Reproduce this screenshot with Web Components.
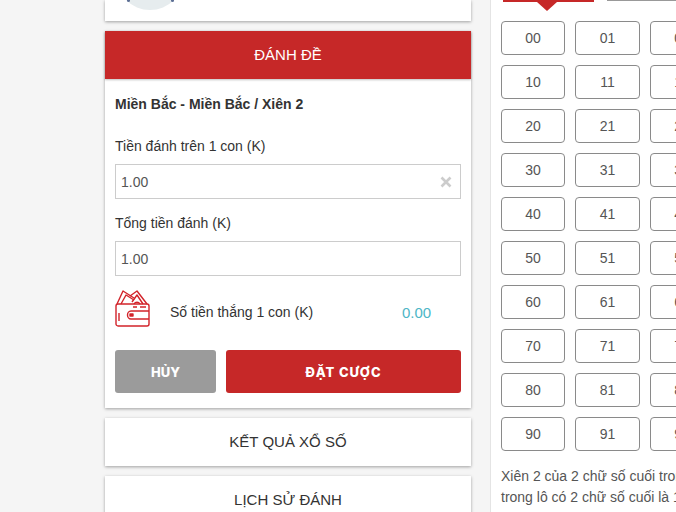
<!DOCTYPE html>
<html lang="vi">
<head>
<meta charset="utf-8">
<title>Đánh đề</title>
<style>
    html, body { margin: 0; height: 100%; overflow: hidden; background: #f5f5f5; }
    body { font-family: "Liberation Sans", Arial, sans-serif; color: #333; font-size: 14px; }
</style>
</head>
<body>
<bet-page>
    <div slot="left">
        <profile-card></profile-card>
        <bet-form></bet-form>
        <link-card>KẾT QUẢ XỔ SỐ</link-card>
        <link-card>LỊCH SỬ ĐÁNH</link-card>
    </div>
    <number-panel slot="right">Xiên 2 của 2 chữ số cuối trong lô có 2 chữ số cuối là 1 trong các số đã chọn<br>trong lô có 2 chữ số cuối là 1 trong các số đã chọn</number-panel>
</bet-page>

<template id="bet-page-tpl">
    <style>
        :host { display: flex; height: 512px; width: 1000px; padding-left: 105px; box-sizing: border-box; gap: 19px; align-items: flex-start; }
        .left { width: 366px; flex: none; }
        .right { width: 420px; flex: none; }
    </style>
    <div class="left"><slot name="left"></slot></div>
    <div class="right"><slot name="right"></slot></div>
</template>

<template id="profile-card-tpl">
    <style>
        :host { display: block; height: 21px; background: #fff; box-shadow: 0 1px 3px rgba(0,0,0,.35); overflow: hidden; margin-bottom: 10px; position: relative; }
        .avatar { width: 68px; height: 68px; border-radius: 50%; background: #e6ecee; margin: -58.5px 0 0 11px; }
        .dot { position: absolute; top: -1px; width: 3px; height: 3px; border-radius: 50%; background: #5d6f95; }
    </style>
    <div class="avatar"></div>
    <div class="dot" style="left:22px"></div>
    <div class="dot" style="left:66px"></div>
</template>

<template id="bet-form-tpl">
    <style>
        :host { display: block; background: #fff; box-shadow: 0 1px 3px rgba(0,0,0,.35); margin-bottom: 10px; height: 377px; }
        .head { height: 46px; padding-bottom: 2px; background: #c62828; color: #fff; font-size: 15px; display: flex; align-items: center; justify-content: center; box-shadow: 0 1px 2px rgba(0,0,0,.25); }
        .body { padding: 17px 10px 0; }
        .title { font-weight: bold; line-height: 16px; color: #333; }
        label { display: block; line-height: 16px; margin: 26px 0 10px; }
        .field { height: 35px; border: 1px solid #ccc; box-sizing: border-box; display: flex; align-items: center; justify-content: space-between; padding: 0 8px 0 5px; color: #555; margin-bottom: -1px; }
        .field svg { display: block; }
        .win { display: flex; align-items: center; height: 40px; margin-top: 13px; }
        .win svg { flex: none; }
        .win span { margin-top: 8px; }
        .win .txt { margin-left: 20px; width: 232px; }
        .win .val { color: #4db6c6; font-size: 15px; }
        .btns { display: flex; gap: 10px; margin-top: 22px; }
        .btn { height: 43px; border-radius: 3px; display: flex; align-items: center; justify-content: center; color: #fff; font: 800 13px Inter, "Open Sans", sans-serif; }
        .cancel { width: 101px; background: #9b9b9b; }
        .ok { flex: 1; background: #c62828; letter-spacing: .9px; }
    </style>
    <div class="head">ĐÁNH ĐỀ</div>
    <div class="body">
        <div class="title">Miền Bắc - Miền Bắc / Xiên 2</div>
        <label>Tiền đánh trên 1 con (K)</label>
        <div class="field">1.00
            <svg width="12" height="12" viewBox="0 0 12 12"><path d="M1.5 1.5l9 9M10.5 1.5l-9 9" stroke="#ccc" stroke-width="2.6" fill="none"/></svg>
        </div>
        <label style="margin-top:17px">Tổng tiền đánh (K)</label>
        <div class="field">1.00</div>
        <div class="win">
            <svg width="35" height="37" viewBox="0 0 35 37" fill="none" stroke="#d2232a" stroke-width="1.4" stroke-linejoin="round">
                <path d="M2 14L8 1l11 7"/>
                <path d="M6 14l5-9 8 5"/>
                <path d="M15 6l7-5 10 13"/>
                <path d="M17 12l5-7 6 9"/>
                <path d="M19 14a3.500 3.500 0 0 1 6 0"/>
                <path d="M1 16c0-1 1-2 2-2h29c1 0 2 1 2 2v18c0 1-1 2-2 2H3c-1 0-2-1-2-2z"/>
                <path d="M34 21H16c-2 0-3.500 2-3.500 4S14 29 16 29h18"/>
                <path d="M15 24h3v2h-3z" fill="#d2232a"/>
                <path d="M4 23v8M18 17h4M25 17h6"/>
            </svg>
            <span class="txt">Số tiền thắng 1 con (K)</span>
            <span class="val">0.00</span>
        </div>
        <div class="btns">
            <div class="btn cancel">HỦY</div>
            <div class="btn ok">ĐẶT CƯỢC</div>
        </div>
    </div>
</template>

<template id="link-card-tpl">
    <style>
        :host { display: flex; height: 46px; padding-bottom: 2px; align-items: center; justify-content: center; background: #fff; box-shadow: 0 1px 3px rgba(0,0,0,.35); font-size: 15px; color: #333; margin-bottom: 10px; }
    </style>
    <slot></slot>
</template>

<template id="number-panel-tpl">
    <style>
        :host { display: block; background: #fff; height: 512px; border-left: 1px solid #e4e4e4; box-sizing: border-box; padding: 0 10px; overflow: hidden; }
        .tabs { display: flex; gap: 13px; height: 21px; padding-left: 2px; }
        .tab { width: 91px; height: 1px; background: #999; position: relative; }
        .tab.on { height: 2px; background: #c62828; }
        .tab.on::after { content: ""; position: absolute; left: 34px; top: 2px; border: 10.5px solid transparent; border-top: 9px solid #c62828; border-bottom: 0; }
        .grid { display: grid; grid-template-columns: 64px 65px 64px 65px 64px; column-gap: 10px; row-gap: 10px; }
        .cell { height: 34px; border: 1px solid #8a8a8a; border-radius: 4px; box-sizing: border-box; display: flex; align-items: center; justify-content: center; color: #555; }
        .note { margin: 15px 0 0; line-height: 21px; color: #555; white-space: nowrap; }
    </style>
    <div class="tabs"><div class="tab on"></div><div class="tab"></div></div>
    <div class="grid"></div>
    <p class="note"><slot></slot></p>
</template>

<script>
    // clones the template with the given id into an open shadow root
    function defineFromTemplate(tag, setup) {
        customElements.define(tag, class extends HTMLElement {
            constructor() {
                super()
                const root = this.attachShadow({ mode: "open" })
                root.appendChild(document.querySelector("#" + tag + "-tpl").content.cloneNode(true))
                if (setup) setup(root)
            }
        })
    }

    defineFromTemplate("bet-page")
    defineFromTemplate("profile-card")
    defineFromTemplate("bet-form")
    defineFromTemplate("link-card")
    defineFromTemplate("number-panel", root => {
        const grid = root.querySelector(".grid")
        for (let row = 0; row < 10; row++) {
            for (let col = 0; col < 5; col++) {
                const cell = document.createElement("div")
                cell.className = "cell"
                cell.textContent = String(row) + String(col)
                grid.appendChild(cell)
            }
        }
    })
</script>
</body>
</html>
